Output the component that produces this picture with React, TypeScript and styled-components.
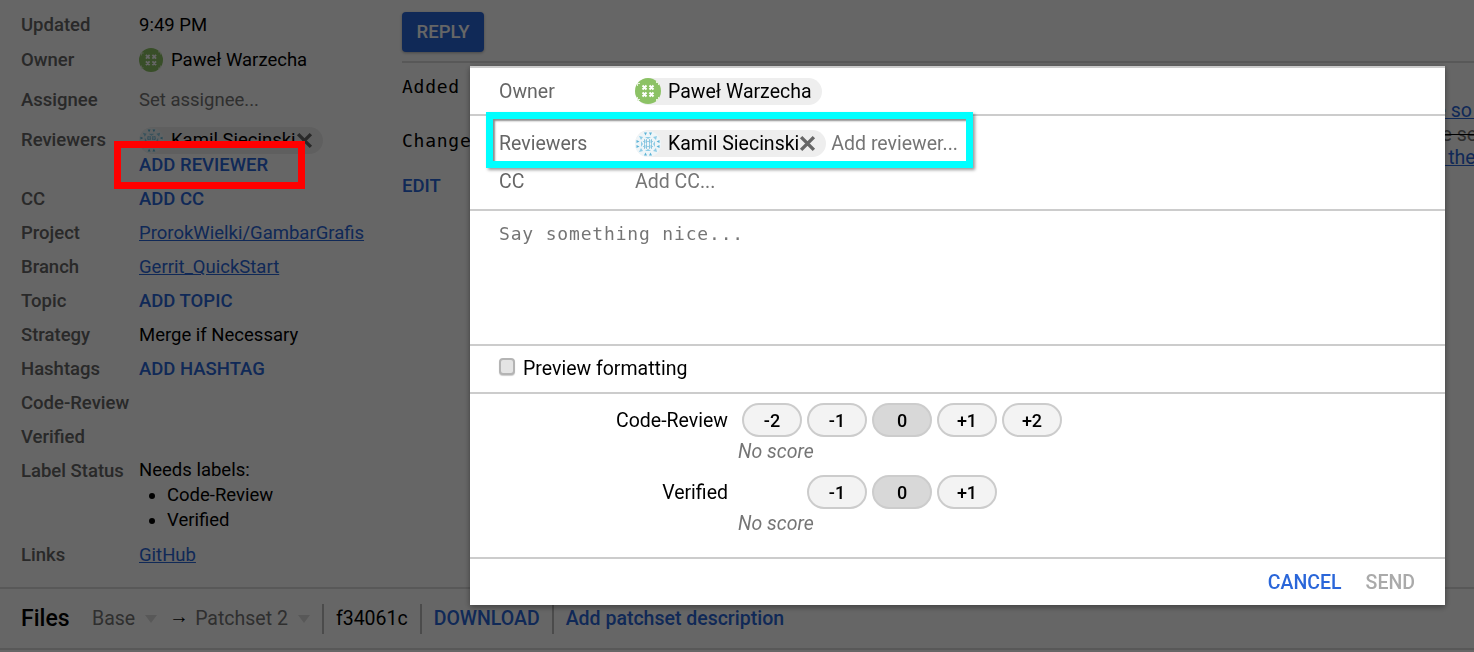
import React from "react";
import styled, { createGlobalStyle } from "styled-components";

const GlobalStyle = createGlobalStyle`
  html, body {
    margin: 0;
    padding: 0;
    background: #fff;
    font-family: Roboto, "Liberation Sans", sans-serif;
    font-size: 18.5px;
    color: #000;
  }
`;

const Page = styled.div`
  position: relative;
  width: 1474px;
  height: 652px;
  overflow: hidden;
`;

const Top = styled.div`
  display: flex;
  height: 587px;
  border-bottom: 2px solid #ddd;
`;

const Metadata = styled.div`
  width: 402px;
  flex: none;
  padding: 8px 0 0 21px;
  box-sizing: border-box;
`;

const MetaRow = styled.div<{ $h?: number }>`
  display: flex;
  height: ${(p) => p.$h ?? 34}px;
  line-height: 34px;
`;

const MetaLabel = styled.div`
  width: 118px;
  flex: none;
  font-weight: 500;
  color: #666;
`;

const MetaValue = styled.div<{ $muted?: boolean }>`
  color: ${(p) => (p.$muted ? "#757575" : "#000")};
`;

const OwnerValue = styled.div`
  display: flex;
  align-items: center;
  gap: 8px;
  height: 34px;
`;

const ReviewerValue = styled.div`
  padding-top: 4px;
  line-height: 26px;
`;

const AddReviewerLine = styled.div`
  margin-top: -2px;
`;

const LabelStatus = styled.div`
  padding-top: 4px;
  line-height: 25px;
`;

const NeedList = styled.ul`
  margin: 0;
  padding-left: 28px;
`;

const Action = styled.a`
  font-weight: 500;
  color: #2a66d9;
`;

const Link = styled.a`
  color: #2a66d9;
  text-decoration: underline;
`;

const Chip = styled.div`
  display: flex;
  align-items: center;
  width: fit-content;
  height: 27px;
  border-radius: 14px;
  background: #eee;
  padding-right: 10px;
  color: #000;
  line-height: 27px;
  white-space: nowrap;
`;

const ChipAvatar = styled.span`
  display: flex;
  margin-right: 7px;
`;

const RemoveIcon = styled.svg`
  display: block;
  flex: none;
`;

const Main = styled.div`
  flex: 1;
  min-width: 0;
  padding-top: 12px;
`;

const ReplyButton = styled.button`
  display: block;
  width: 82px;
  height: 40px;
  padding: 0;
  border: 0;
  border-radius: 4px;
  background: #2a66d9;
  color: #fff;
  font: 500 18.5px Roboto, sans-serif;
  box-shadow: 0 1px 3px rgba(0, 0, 0, 0.3);
`;

const MainDivider = styled.div`
  height: 2px;
  margin-top: 9px;
  background: #ddd;
`;

const Commit = styled.div`
  display: flex;
  height: 260px;
`;

const CommitInfo = styled.div`
  width: 160px;
  flex: none;
  padding-top: 11px;
`;

const Mono = styled.div<{ $h: number }>`
  height: ${(p) => p.$h}px;
  line-height: 26px;
  font-family: "DejaVu Sans Mono", monospace;
  font-size: 18px;
  letter-spacing: 0.75px;
`;

const EditAction = styled(Action)`
  display: block;
  margin-top: 1px;
`;

const Description = styled.div`
  padding-top: 36px;
  white-space: nowrap;
  font-size: 19.5px;
  line-height: 23.5px;
`;

const DescLine = styled.div<{ $indent: number }>`
  margin-left: ${(p) => p.$indent}px;
`;

const Struck = styled.span`
  color: #757575;
  text-decoration: line-through;
  text-decoration-color: #000;
`;

const FilesBar = styled.div`
  display: flex;
  align-items: center;
  height: 59px;
  padding-left: 21px;
  border-bottom: 2px solid #ddd;
  font-size: 19.5px;
`;

const FilesTitle = styled.div`
  width: 71px;
  font-size: 23px;
  font-weight: 500;
`;

const Select = styled.div`
  display: flex;
  align-items: center;
  color: #757575;
`;

const Caret = styled.span`
  width: 0;
  height: 0;
  margin: 0 12px 0 10px;
  border-left: 6.5px solid transparent;
  border-right: 6.5px solid transparent;
  border-top: 8px solid #ddd;
`;

const Arrow = styled.span`
  width: 26px;
  flex: none;
  margin-top: -4px;
  color: #000;
`;

const BarCell = styled.div`
  display: flex;
  align-items: center;
  height: 30px;
  padding: 0 12px;
  border-left: 2px solid #bbb;
`;

const Overlay = styled.div`
  position: fixed;
  inset: 0;
  background: rgba(0, 0, 0, 0.6);
`;

const Dialog = styled.div`
  position: fixed;
  left: 470px;
  top: 66px;
  width: 975px;
  height: 539px;
  display: flex;
  flex-direction: column;
  background: #fff;
  border-top: 2px solid #ccc;
  box-sizing: border-box;
  box-shadow: 0 2px 6px rgba(0, 0, 0, 0.4);
  font-size: 19.5px;
`;

const Section = styled.div<{ $h: number }>`
  height: ${(p) => p.$h}px;
  flex: none;
  box-sizing: border-box;
  padding-left: 29px;
  border-bottom: 2px solid #ccc;
`;

const PersonRow = styled.div<{ $h: number }>`
  display: flex;
  align-items: center;
  height: ${(p) => p.$h}px;
`;

const PersonLabel = styled.div`
  width: 136px;
  flex: none;
  color: #666;
`;

const Placeholder = styled.span<{ $left?: number }>`
  margin-left: ${(p) => p.$left ?? 0}px;
  color: #757575;
`;

const MessageInput = styled.div`
  padding-top: 10px;
  line-height: 26px;
  font-family: "DejaVu Sans Mono", monospace;
  font-size: 18px;
  letter-spacing: 0.83px;
  color: #757575;
`;

const PreviewRow = styled.label`
  display: flex;
  align-items: center;
  height: 44px;
`;

const PreviewBox = styled.span`
  width: 16px;
  height: 17px;
  margin: -3px 8px 0 0;
  border: 2px solid #b4b4b4;
  border-radius: 4px;
  box-sizing: border-box;
  background: #e4e4e4;
  box-shadow: 0 1px 1px rgba(0, 0, 0, 0.2);
`;

const Scores = styled.div`
  padding-top: 9px;
  margin-left: -29px;
`;

const ScoreRow = styled.div`
  display: flex;
  align-items: center;
  height: 34px;
`;

const ScoreName = styled.div`
  width: 258px;
  flex: none;
  text-align: right;
`;

const ScoreButtons = styled.div`
  display: grid;
  grid-template-columns: repeat(5, 60px);
  column-gap: 5px;
  margin-left: 14px;
`;

const ScoreButton = styled.button<{ $selected?: boolean; $col: number }>`
  grid-column: ${(p) => p.$col};
  height: 34px;
  padding: 0;
  border: 2px solid #ccc;
  border-radius: 17px;
  background: ${(p) => (p.$selected ? "#d8d8d8" : "#f3f3f3")};
  color: #000;
  font: 500 18px Roboto, sans-serif;
`;

const NoScore = styled.div`
  height: 38px;
  padding-left: 268px;
  line-height: 30px;
  font-style: italic;
  color: #757575;
`;

const Footer = styled.div`
  display: flex;
  flex: 1;
  align-items: center;
  justify-content: flex-end;
  gap: 24px;
  padding-right: 30px;
  font-weight: 500;
`;

const Cancel = styled.span`
  color: #2a66d9;
`;

const Send = styled.span`
  color: #aaa;
`;

const RedMark = styled.div`
  position: fixed;
  left: 114px;
  top: 141px;
  width: 191px;
  height: 48px;
  box-sizing: border-box;
  border: 7px solid #ff0000;
`;

const CyanMark = styled.div`
  position: fixed;
  left: 486px;
  top: 112px;
  width: 487px;
  height: 56px;
  box-sizing: border-box;
  border: 7px solid #00ffff;
  box-shadow: 2px 2px 3px rgba(0, 0, 0, 0.4), inset 2px 2px 2px rgba(0, 0, 0, 0.45);
`;

// drawn avatars, these are the generated identicons from the screenshot
const GreenAvatar = ({ size }: { size: number }) => (
  <svg width={size} height={size} viewBox="0 0 26 26">
    <circle cx="13" cy="13" r="13" fill="#8cc265" />
    <path
      d="M7.500 7.500l4 4M11.500 7.500l-4 4M14.500 7.500l4 4M18.500 7.500l-4 4M7.500 14.500l4 4M11.500 14.500l-4 4M14.500 14.500l4 4M18.500 14.500l-4 4"
      stroke="#fff"
      strokeWidth="2"
      fill="none"
    />
    <path
      d="M2 5h3v1H3v2H2zM21 3h2v1h1v3h-1V5h-2zM2 19h1v2h2v1H3v1H2zM23 19h1v3h-1v1h-2v-2h2z"
      fill="#e6f2da"
    />
  </svg>
);

const BlueAvatar = ({ size }: { size: number }) => (
  <svg width={size} height={size} viewBox="0 0 26 26">
    <circle cx="13" cy="13" r="13" fill="#eef5f8" />
    <path
      d="M9 1.500h3l-1.500 3zM14 1.500h3l-1.500 3zM1.500 9l3 1.500-3 1.500zM24.500 9v3l-3-1.500zM1.500 14l3 1.500-3 1.500zM24.500 14v3l-3-1.500zM9 24.500l1.500-3 1.500 3zM14 24.500l1.500-3 1.500 3z"
      fill="#5cb3d6"
    />
    <path
      d="M4 5l4 1-2 3zM22 5l-1 4-3-3zM4 21l2-4 2 3zM22 21l-4-1 3-3zM10 6h6l-3 2zM6 10l2 3-2 3zM20 10v6l-2-3zM10 20l3-2 3 2z"
      fill="#8fcde6"
    />
    <path
      d="M9 9h3v3H9zM14 9h3v3h-3zM9 14h3v3H9zM14 14h3v3h-3z"
      fill="#bfe2f0"
      stroke="#4fa8cf"
      strokeWidth="1"
      strokeDasharray="1 1"
    />
  </svg>
);

const CrossIcon = ({ size }: { size: number }) => (
  <RemoveIcon width={size} height={size} viewBox="0 0 16 16">
    <path d="M2 2l12 12M14 2L2 14" stroke="#666" strokeWidth="3.200" fill="none" />
  </RemoveIcon>
);

const metaRows: [string, React.ReactNode][] = [
  ["CC", <Action>ADD CC</Action>],
  ["Project", <Link>ProrokWielki/GambarGrafis</Link>],
  ["Branch", <Link>Gerrit_QuickStart</Link>],
  ["Topic", <Action>ADD TOPIC</Action>],
  ["Strategy", <MetaValue>Merge if Necessary</MetaValue>],
  ["Hashtags", <Action>ADD HASHTAG</Action>],
  ["Code-Review", null],
  ["Verified", null],
];

const scores = [
  { name: "Code-Review", values: ["-2", "-1", "0", "+1", "+2"], start: 1 },
  { name: "Verified", values: ["-1", "0", "+1"], start: 2 },
];

export default function App() {
  return (
    <Page>
      <GlobalStyle />
      <Top>
        <Metadata>
          <MetaRow $h={35}>
            <MetaLabel>Updated</MetaLabel>
            <MetaValue>9:49 PM</MetaValue>
          </MetaRow>
          <MetaRow $h={40}>
            <MetaLabel>Owner</MetaLabel>
            <OwnerValue>
              <GreenAvatar size={24} />
              Paweł Warzecha
            </OwnerValue>
          </MetaRow>
          <MetaRow $h={40}>
            <MetaLabel>Assignee</MetaLabel>
            <MetaValue $muted>Set assignee...</MetaValue>
          </MetaRow>
          <MetaRow $h={59}>
            <MetaLabel>Reviewers</MetaLabel>
            <ReviewerValue>
              <Chip>
                <ChipAvatar>
                  <BlueAvatar size={25} />
                </ChipAvatar>
                Kamil Siecinski
                <CrossIcon size={17} />
              </Chip>
              <AddReviewerLine>
                <Action>ADD REVIEWER</Action>
              </AddReviewerLine>
            </ReviewerValue>
          </MetaRow>
          {metaRows.map(([label, value]) => (
            <MetaRow key={label}>
              <MetaLabel>{label}</MetaLabel>
              {value}
            </MetaRow>
          ))}
          <MetaRow $h={84}>
            <MetaLabel>Label Status</MetaLabel>
            <LabelStatus>
              Needs labels:
              <NeedList>
                <li>Code-Review</li>
                <li>Verified</li>
              </NeedList>
            </LabelStatus>
          </MetaRow>
          <MetaRow>
            <MetaLabel>Links</MetaLabel>
            <Link>GitHub</Link>
          </MetaRow>
        </Metadata>
        <Main>
          <ReplyButton>REPLY</ReplyButton>
          <MainDivider />
          <Commit>
            <CommitInfo>
              <Mono $h={54}>Added</Mono>
              <Mono $h={46}>Change</Mono>
              <EditAction>EDIT</EditAction>
            </CommitInfo>
            <Description>
              <DescLine $indent={733}>
                <Link>commit message so far</Link>
              </DescLine>
              <DescLine $indent={864}>
                <Struck>file settings</Struck>
              </DescLine>
              <DescLine $indent={843}>
                <Link>read the docs</Link>
              </DescLine>
            </Description>
          </Commit>
        </Main>
      </Top>
      <FilesBar>
        <FilesTitle>Files</FilesTitle>
        <Select>
          Base
          <Caret />
        </Select>
        <Arrow>→</Arrow>
        <Select>
          Patchset 2
          <Caret />
        </Select>
        <BarCell>f34061c</BarCell>
        <BarCell>
          <Action>DOWNLOAD</Action>
        </BarCell>
        <BarCell>
          <Action>Add patchset description</Action>
        </BarCell>
      </FilesBar>

      <Overlay />
      <RedMark />

      <Dialog>
        <Section $h={48}>
          <PersonRow $h={46}>
            <PersonLabel>Owner</PersonLabel>
            <Chip>
              <ChipAvatar>
                <GreenAvatar size={26} />
              </ChipAvatar>
              Paweł Warzecha
            </Chip>
          </PersonRow>
        </Section>
        <Section $h={95}>
          <PersonRow $h={55}>
            <PersonLabel>Reviewers</PersonLabel>
            <Chip>
              <ChipAvatar>
                <BlueAvatar size={26} />
              </ChipAvatar>
              Kamil Siecinski
              <CrossIcon size={17} />
            </Chip>
            <Placeholder $left={5}>Add reviewer...</Placeholder>
          </PersonRow>
          <PersonRow $h={20}>
            <PersonLabel>CC</PersonLabel>
            <Placeholder>Add CC...</Placeholder>
          </PersonRow>
        </Section>
        <Section $h={135}>
          <MessageInput>Say something nice...</MessageInput>
        </Section>
        <Section $h={48}>
          <PreviewRow>
            <PreviewBox />
            Preview formatting
          </PreviewRow>
        </Section>
        <Section $h={165}>
          <Scores>
            {scores.map((score) => (
              <React.Fragment key={score.name}>
                <ScoreRow>
                  <ScoreName>{score.name}</ScoreName>
                  <ScoreButtons>
                    {score.values.map((v, i) => (
                      <ScoreButton key={v} $col={score.start + i} $selected={v === "0"}>
                        {v}
                      </ScoreButton>
                    ))}
                  </ScoreButtons>
                </ScoreRow>
                <NoScore>No score</NoScore>
              </React.Fragment>
            ))}
          </Scores>
        </Section>
        <Footer>
          <Cancel>CANCEL</Cancel>
          <Send>SEND</Send>
        </Footer>
      </Dialog>
      <CyanMark />
    </Page>
  );
}
